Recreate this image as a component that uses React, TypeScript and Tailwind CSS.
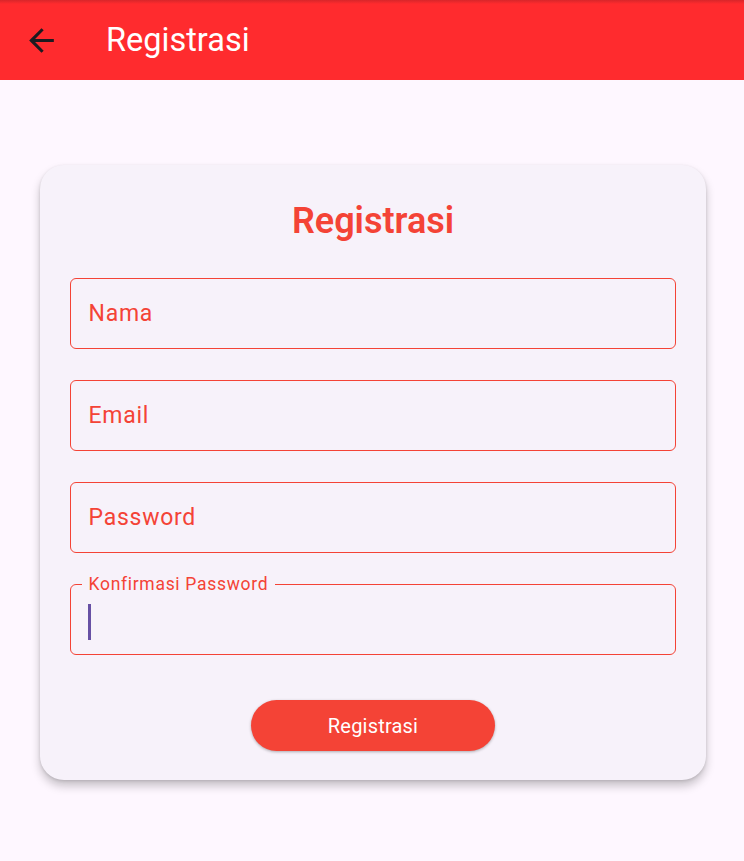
import React from "react";

function Field({ label }: { label: string }) {
  return (
    <div className="h-[71px] w-full rounded-[6px] border-[1.5px] border-[#F44336] flex items-center pl-[17.5px]">
      <span className="text-[23px] tracking-[0.75px] text-[#F44336] leading-none">{label}</span>
    </div>
  );
}

export default function App() {
  return (
    <div
      className="w-[744px] h-[861px] bg-[#FEF7FF] flex flex-col overflow-hidden"
      style={{ fontFamily: "Roboto, 'Liberation Sans', sans-serif" }}
    >
      <header className="relative h-[80px] bg-[#FF2B2E] flex items-center shrink-0">
        <div className="absolute inset-x-0 top-0 h-[4px] bg-gradient-to-b from-[#D8262A] to-[#FF2B2E]" />
        <div className="w-[80px] flex items-center justify-center pl-0">
          <svg width="37" height="37" viewBox="0 0 24 24" className="ml-[2px]">
            <path d="M20 11H7.83l5.59-5.59L12 4l-8 8 8 8 1.41-1.41L7.83 13H20v-2z" fill="#1D1B20" />
          </svg>
        </div>
        <h1 className="ml-[26px] text-[32.5px] text-white leading-none font-normal">Registrasi</h1>
      </header>

      <div className="pl-[40px] pr-[38px] pt-[85px]">
        <div className="bg-[#F7F2FA] rounded-[24px] shadow-[0_6px_10px_rgba(0,0,0,0.22),0_1px_3px_rgba(0,0,0,0.12)] px-[30px] pt-[36px] pb-[29px] flex flex-col">
          <h2 className="text-center text-[36px] leading-[41px] font-semibold text-[#F44336] mb-[36px]">
            Registrasi
          </h2>
          <div className="flex flex-col gap-[31px]">
            <Field label="Nama" />
            <Field label="Email" />
            <Field label="Password" />
            <div className="relative h-[71px] w-full rounded-[6px] border-[1.5px] border-[#F44336] flex items-center pl-[16.5px]">
              <span className="absolute left-[10.5px] -top-[12.5px] px-[7px] bg-[#F7F2FA] text-[17.5px] tracking-[0.7px] text-[#F44336] leading-[22px]">
                Konfirmasi Password
              </span>
              <div className="w-[3px] h-[36px] bg-[#6750A4] mt-[4px]" />
            </div>
          </div>
          <div className="flex justify-center mt-[45px]">
            <button className="w-[244px] h-[51px] rounded-full bg-[#F44336] text-white text-[20px] font-normal tracking-[0.2px] shadow-[0_1px_3px_rgba(0,0,0,0.3)]">
              Registrasi
            </button>
          </div>
        </div>
      </div>
    </div>
  );
}
